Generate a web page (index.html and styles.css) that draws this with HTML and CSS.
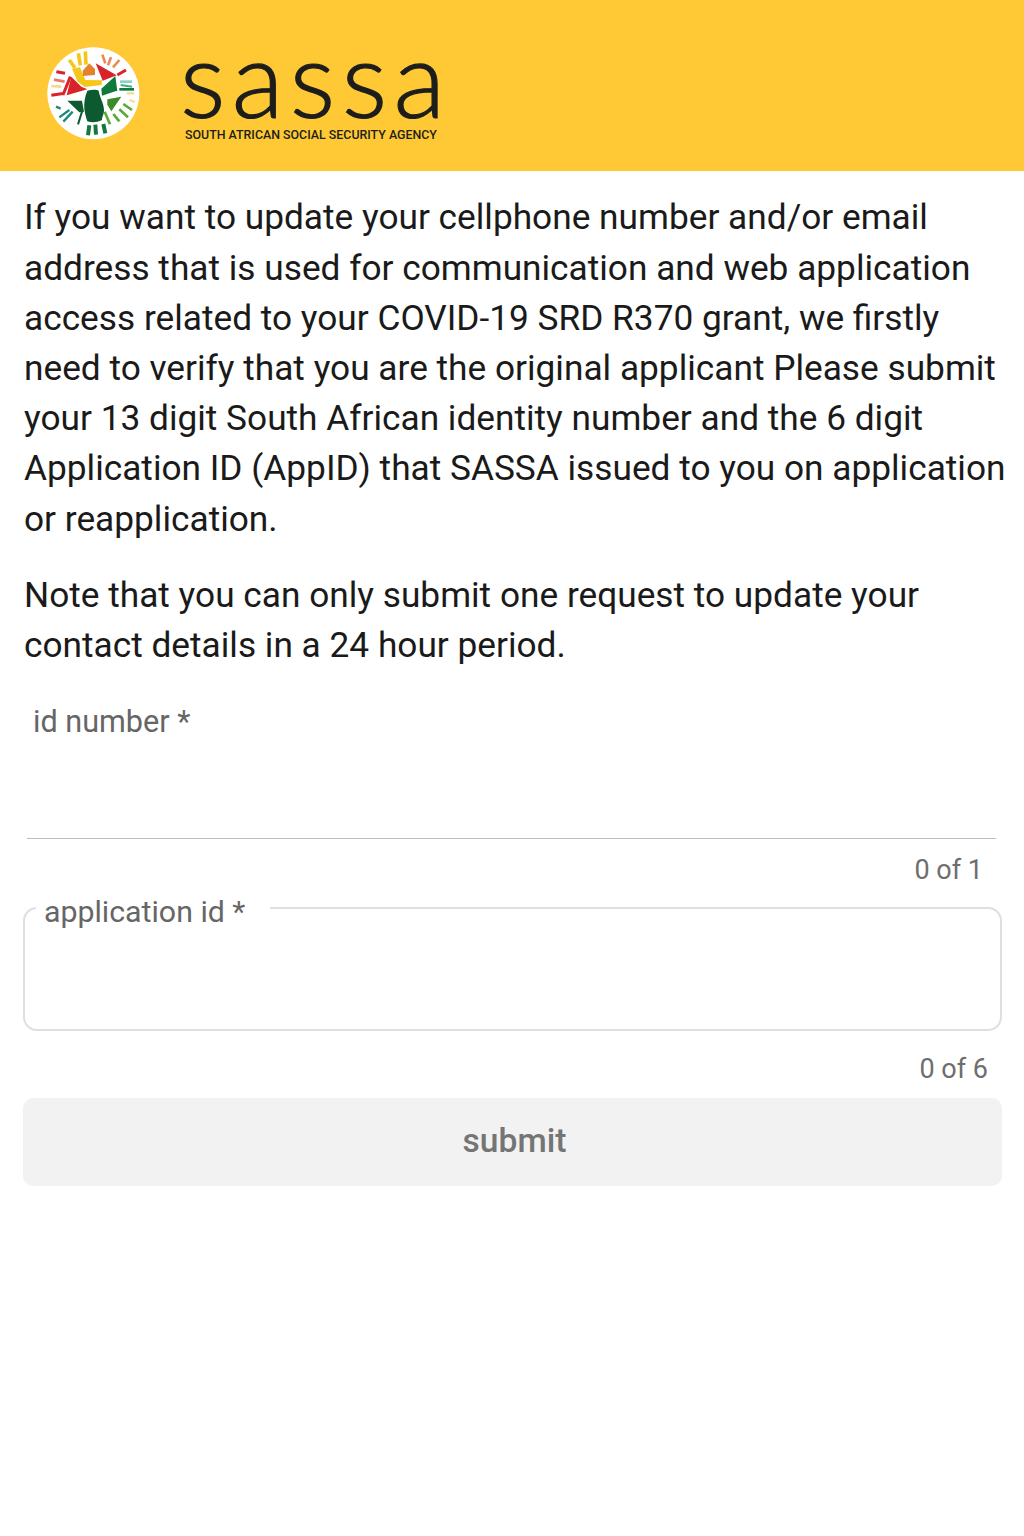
FILE: index.html
```html
<!DOCTYPE html>
<html lang="en">
<head>
<meta charset="utf-8">
<title>SASSA</title>
<link rel="stylesheet" href="styles.css">
</head>
<body>
<header class="banner">
  <svg class="emblem" viewBox="0 0 375 375" aria-hidden="true">
    <circle cx="190" cy="190" r="138" fill="#fff"/>
    <g fill="none" stroke-linecap="butt" stroke-width="9">
      <path stroke="#f5c71a" stroke-width="11" d="M118 90l17 24M145 70l6 36M166 64l2 40"/>
      <path stroke="#e88b4e" stroke-width="8" d="M217 74l9 26M268 90l-19 22"/>
      <path stroke="#e8895f" stroke-width="8" d="M243 82l-9 24"/>
      <path stroke="#d8232a" d="M288 120l-26 15M105 130l-26-5M121 140l-22 55M64 196l40-6"/>
      <path stroke="#e87a6a" stroke-width="8" d="M104 155l-32-6"/>
      <path stroke="#f0dc8c" stroke-width="8" d="M94 170l-30-2"/>
      <path stroke="#8ed0c8" stroke-width="8" d="M270 155h36"/>
      <path stroke="#3fae7a" stroke-width="6" d="M272 165l34 5"/>
      <path stroke="#0f7a3c" stroke-width="8" d="M268 178h44"/>
      <path stroke="#f2dc90" stroke-width="7" d="M290 190h22M298 210l16 6"/>
      <path stroke="#1f8a7a" stroke-width="7" d="M78 230l14 6M88 262l30-22M100 275l28-30"/>
      <path stroke="#5da83a" stroke-width="8" d="M280 222l26 18M268 238l26 24M250 252l18 22M224 245l16 38"/>
      <path stroke="#0c5a30" stroke-width="6" d="M156 245l-12 38"/>
      <path stroke="#14783c" stroke-width="12" d="M178 286l-4 30M196 284l2 30M220 282l6 28"/>
    </g>
    <path fill="#f5c71a" d="M126 116l24-4 16 38 50 1-1 14-50 6-22-16z"/>
    <path fill="#e5822c" d="M158 122l20-22 17 17v18l-36 3z"/>
    <path fill="#d8232a" d="M197 100l63 36-42 16zM124 140l30 30 18 8-62 18z"/>
    <path fill="#0f7a3c" d="M214 176l42-38 6 46-4-1-42 14z"/>
    <path fill="#0c5a30" d="M112 212h44l6 33-14 2zM172 182C185 178 200 178 206 182 208 200 222 220 222 240 222 255 215 262 216 270 200 278 185 278 172 274 165 250 155 225 172 182z"/>
    <path fill="#3d8a28" d="M232 208l42-8-30 44-12-20z"/>
  </svg>
  <div class="brand">
    <span class="brand-name">sassa</span>
    <span class="brand-full">SOUTH ATRICAN SOCIAL SECURITY AGENCY</span>
  </div>
</header>
<main class="content">
  <p class="copy">If you want to update your cellphone number and/or email address that is used for communication and web application access related to your COVID-19 SRD R370 grant, we firstly need to verify that you are the original applicant Please submit your 13 digit South African identity number and the 6 digit Application ID (AppID) that SASSA issued to you on application or reapplication.</p>
  <p class="copy note">Note that you can only submit one request to update your contact details in a 24 hour period.</p>
  <form class="form">
    <div class="field-line">
      <label class="line-label" for="idn">id number *</label>
      <input class="line-input" id="idn" type="text">
    </div>
    <div class="count count-first">0 of 1</div>
    <fieldset class="field-box">
      <legend class="box-label">application id *</legend>
    </fieldset>
    <div class="count count-second">0 of 6</div>
    <button class="submit" type="button" disabled>submit</button>
  </form>
</main>
</body>
</html>
```
FILE: styles.css
```css
* { box-sizing: border-box; }
html, body { margin: 0; padding: 0; background: #fff; }
body { font-family: Roboto, "Liberation Sans", sans-serif; color: #1c1c1c; }

.banner {
  height: 171px;
  background: #fec934;
  display: flex;
  align-items: center;
  padding: 14px 0 0 30px;
  gap: 27px;
}
.emblem { width: 125px; height: 125px; flex: none; }
.brand { display: flex; flex-direction: column; }
.brand-name {
  font-family: Lato, sans-serif;
  font-size: 107px;
  font-weight: 300;
  -webkit-text-stroke: 1.2px #1d1d1b;
  line-height: 80px;
  letter-spacing: 6.3px;
  color: #1d1d1b;
  margin: -6px 0 0 -2px;
}
.brand-full {
  font-family: Roboto, sans-serif;
  font-size: 12.4px;
  font-weight: 500;
  color: #1d1d1b;
  line-height: 14px;
  margin-top: 11px;
  margin-left: 3px;
  white-space: nowrap;
}

.content { padding: 21.4px 18px 0 24px; }
.copy {
  margin: 0;
  font-size: 35.25px;
  line-height: 50.2px;
  color: #1a1a1a;
}
.note { margin-top: 26px; }

.form { display: flex; flex-direction: column; margin-right: 4px; margin-top: 12px; }
.field-line { height: 157px; padding-left: 3px; margin-right: 6px; display: flex; flex-direction: column; }
.line-label { font-size: 30.6px; line-height: 40px; color: #666; padding: 20px 0 0 6px; height: 75px; }
.line-input {
  flex: 1;
  border: 0;
  border-bottom: 1px solid #bdbdbd;
  background: transparent;
  outline: none;
}
.count { font-size: 27px; line-height: 32px; color: #6e6e6e; text-align: right; }
.count-first { padding-right: 19px; margin-top: 15px; }
.count-second { padding-right: 14px; margin-top: 22px; }

.field-box {
  margin: 8px 0 0 -1px;
  height: 137px;
  border: 2px solid #dfdfdf;
  border-radius: 14px;
  padding: 0 0 0 11px;
  min-width: 0;
}
.box-label { padding: 8px 25px 0 8px; font-size: 30.3px; line-height: 20px; color: #666; }

.submit {
  height: 88px;
  margin: 13px 0 0 -1px;
  border: 0;
  border-radius: 10px;
  background: #f2f2f2;
  padding: 0 0 4px 4px;
  font-family: Roboto, sans-serif;
  font-size: 33.6px;
  font-weight: 500;
  color: #757575;
}
```
